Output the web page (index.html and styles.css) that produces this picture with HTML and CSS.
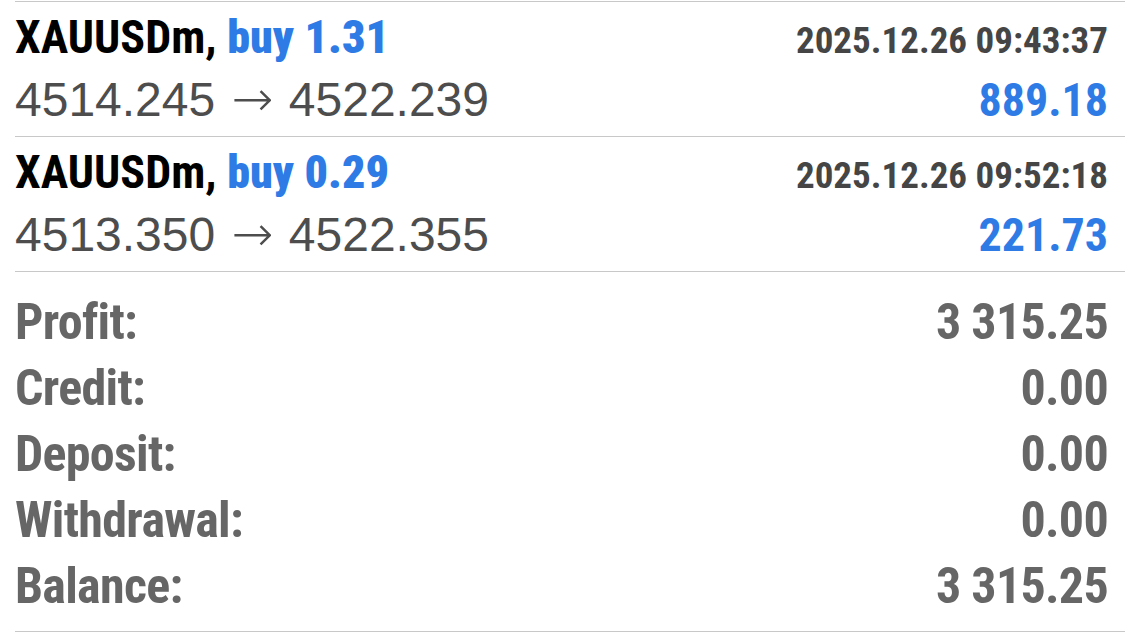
FILE: index.html
```html
<!DOCTYPE html>
<html>
<head>
<meta charset="utf-8">
<title>History</title>
<link rel="stylesheet" href="styles.css">
</head>
<body>
<div class="list">
  <div class="deal">
    <div class="deal-top">
      <span class="sym">XAUUSDm, <b class="buy">buy 1.31</b></span>
      <span class="time">2025.12.26 09:43:37</span>
    </div>
    <div class="deal-bot">
      <span class="price">4514.245 <i class="arr">→</i> 4522.239</span>
      <span class="pl">889.18</span>
    </div>
  </div>
  <div class="deal">
    <div class="deal-top">
      <span class="sym">XAUUSDm, <b class="buy">buy 0.29</b></span>
      <span class="time">2025.12.26 09:52:18</span>
    </div>
    <div class="deal-bot">
      <span class="price">4513.350 <i class="arr">→</i> 4522.355</span>
      <span class="pl">221.73</span>
    </div>
  </div>
  <div class="summary">
    <div class="sum-row"><span>Profit:</span><span>3 315.25</span></div>
    <div class="sum-row"><span>Credit:</span><span>0.00</span></div>
    <div class="sum-row"><span>Deposit:</span><span>0.00</span></div>
    <div class="sum-row"><span>Withdrawal:</span><span>0.00</span></div>
    <div class="sum-row"><span>Balance:</span><span>3 315.25</span></div>
  </div>
</div>
</body>
</html>
```
FILE: styles.css
```css
body{margin:0;background:#fff;font-family:"Liberation Sans",Arial,sans-serif;}
.list{margin-top:1px;margin-left:15px;}
.deal{border-top:1px solid #c8c8c8;padding:5px 17px 7px 0;display:flex;flex-direction:column;gap:2px;}
.deal-top,.deal-bot{display:flex;justify-content:space-between;align-items:baseline;height:60px;line-height:60px;}
.sym,.time,.pl,.sum-row{font-family:Roboto,"Liberation Sans",sans-serif;font-stretch:75%;font-weight:bold;}
.sym{font-size:46px;color:#000;}
.sym .buy{color:#2f7be6;}
.time{font-size:37px;color:#454545;}
.price{font-size:48px;color:#4d4d4d;}
.price .arr{font-style:normal;font-family:"DejaVu Sans",sans-serif;font-size:50px;font-weight:200;margin:0 2px 0 3px;}
.pl{font-size:46px;color:#2f7be6;}
.summary{border-top:1px solid #c8c8c8;border-bottom:1px solid #c8c8c8;padding:17px 17px 12px 0;}
.sum-row{display:flex;justify-content:space-between;height:66px;line-height:66px;font-size:50px;letter-spacing:-0.7px;color:#666;}
```
